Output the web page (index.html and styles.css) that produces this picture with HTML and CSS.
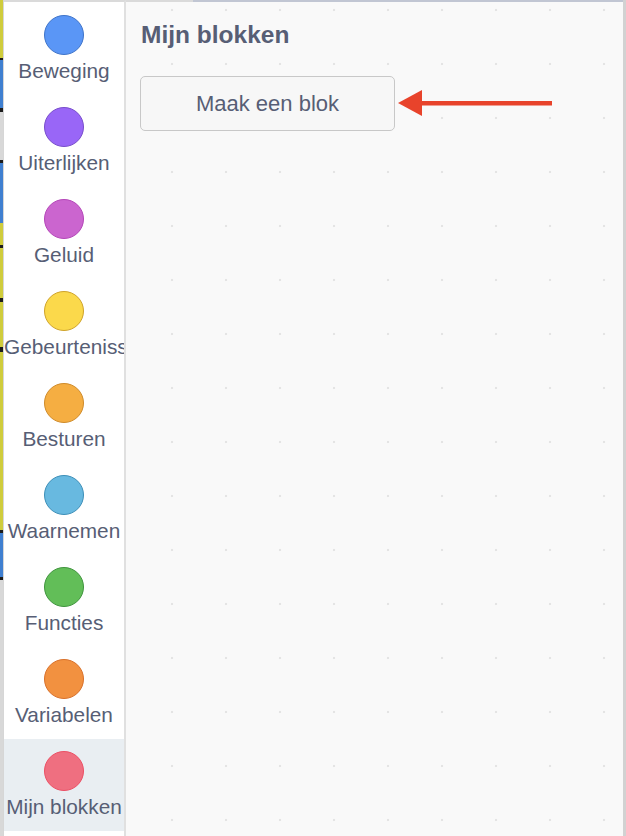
FILE: index.html
```html
<!DOCTYPE html>
<html lang="nl">
<head>
<meta charset="utf-8">
<title>Mijn blokken</title>
<link rel="stylesheet" href="styles.css">
</head>
<body>
<div class="app">
  <div class="strip">
    <div class="seg y" style="height:58px"></div>
    <div class="seg k" style="height:2px"></div>
    <div class="seg b" style="height:48px"></div>
    <div class="seg k" style="height:4px"></div>
    <div class="seg g" style="height:48px"></div>
    <div class="seg k" style="height:3px"></div>
    <div class="seg b" style="height:60px"></div>
    <div class="seg y" style="height:22px"></div>
    <div class="seg k" style="height:3px"></div>
    <div class="seg y" style="height:50px"></div>
    <div class="seg k" style="height:4px"></div>
    <div class="seg y" style="height:45px"></div>
    <div class="seg k" style="height:5px"></div>
    <div class="seg y" style="height:178px"></div>
    <div class="seg k" style="height:3px"></div>
    <div class="seg b" style="height:44px"></div>
    <div class="seg k" style="height:3px"></div>
    <div class="seg g rest"></div>
  </div>
  <nav class="menu">
    <div class="cat"><span class="dot motion"></span><span class="label">Beweging</span></div>
    <div class="cat"><span class="dot looks"></span><span class="label">Uiterlijken</span></div>
    <div class="cat"><span class="dot sound"></span><span class="label">Geluid</span></div>
    <div class="cat"><span class="dot events"></span><span class="label">Gebeurtenissen</span></div>
    <div class="cat"><span class="dot control"></span><span class="label">Besturen</span></div>
    <div class="cat"><span class="dot sensing"></span><span class="label">Waarnemen</span></div>
    <div class="cat"><span class="dot operators"></span><span class="label">Functies</span></div>
    <div class="cat"><span class="dot variables"></span><span class="label">Variabelen</span></div>
    <div class="cat selected"><span class="dot myblocks"></span><span class="label">Mijn blokken</span></div>
  </nav>
  <main class="flyout">
    <div class="topbar"></div>
    <h2 class="title">Mijn blokken</h2>
    <div class="row">
      <button class="make">Maak een blok</button>
      <svg class="arrow" width="156" height="28" viewBox="0 0 156 28">
        <polygon points="0,13 24,0 24,26" fill="#e8432b"/>
        <rect x="22" y="11" width="132" height="4.5" fill="#e8432b"/>
      </svg>
    </div>
  </main>
</div>
</body>
</html>
```
FILE: styles.css
```css
html, body {
  margin: 0;
  padding: 0;
  width: 626px;
  height: 836px;
  overflow: hidden;
  background: #ffffff;
  font-family: "Liberation Sans", Arial, Helvetica, sans-serif;
  color: #575e75;
}

.app {
  display: flex;
  height: 836px;
}

.strip {
  width: 3px;
  display: flex;
  flex-direction: column;
  border-right: 1px solid #d6d6d6;
  flex: none;
}
.seg { width: 3px; }
.seg.y { background: #cfcc3c; }
.seg.b { background: #3f7fd0; }
.seg.k { background: #1c1c1c; }
.seg.g { background: #d8d8d8; }
.seg.rest { flex: 1; }

.menu {
  width: 120px;
  flex: none;
  border-top: 2px solid #dadada;
  border-right: 2px solid #e0e0e0;
  padding-top: 1px;
  background: #ffffff;
  display: flex;
  flex-direction: column;
}

.cat {
  height: 92px;
  box-sizing: border-box;
  padding: 12px 0;
  display: flex;
  flex-direction: column;
  align-items: center;
  overflow: hidden;
}
.cat.selected { background: #e9eef2; }

.dot {
  width: 40px;
  height: 40px;
  box-sizing: border-box;
  border-radius: 50%;
  border: 1.5px solid;
  margin-bottom: 4px;
  flex: none;
}
.motion { background: #5a96f6; border-color: #3f74c9; }
.looks { background: #9966f7; border-color: #774dcb; }
.sound { background: #cb65cf; border-color: #b445b8; }
.events { background: #fbd94b; border-color: #cfa32a; }
.control { background: #f5ae42; border-color: #cf8b2a; }
.sensing { background: #68b9e0; border-color: #3d8fb8; }
.operators { background: #62be58; border-color: #3f943d; }
.variables { background: #f29140; border-color: #d8702a; }
.myblocks { background: #ef6f80; border-color: #ec4f64; }

.label {
  display: block;
  width: 100%;
  font-size: 20.8px;
  line-height: 24px;
  text-align: center;
  white-space: nowrap;
  overflow: hidden;
}

.flyout {
  flex: 1;
  background-color: #f9f9f9;
  background-image: radial-gradient(circle, #e4e4e4 0.9px, rgba(249,249,249,0) 1.6px);
  background-size: 54px 54px;
  background-position: 19px 37px;
  border-right: 3px solid #d2d2d2;
  display: flex;
  flex-direction: column;
}

.topbar {
  height: 2px;
  background: linear-gradient(to right, #dadada 67px, #c1c6d3 67px);
}

.title {
  margin: 18px 0 0 15px;
  font-size: 24.5px;
  line-height: 30px;
  font-weight: bold;
  color: #575e75;
}

.row {
  display: flex;
  align-items: center;
  margin: 26px 0 0 14px;
}

.make {
  width: 255px;
  height: 55px;
  box-sizing: border-box;
  border: 1px solid #c8c8c8;
  border-radius: 5px;
  background: #f7f7f7;
  font-family: "Liberation Sans", Arial, Helvetica, sans-serif;
  font-size: 22px;
  color: #575e75;
  padding: 0;
}

.arrow {
  margin-left: 3px;
  flex: none;
}
```
